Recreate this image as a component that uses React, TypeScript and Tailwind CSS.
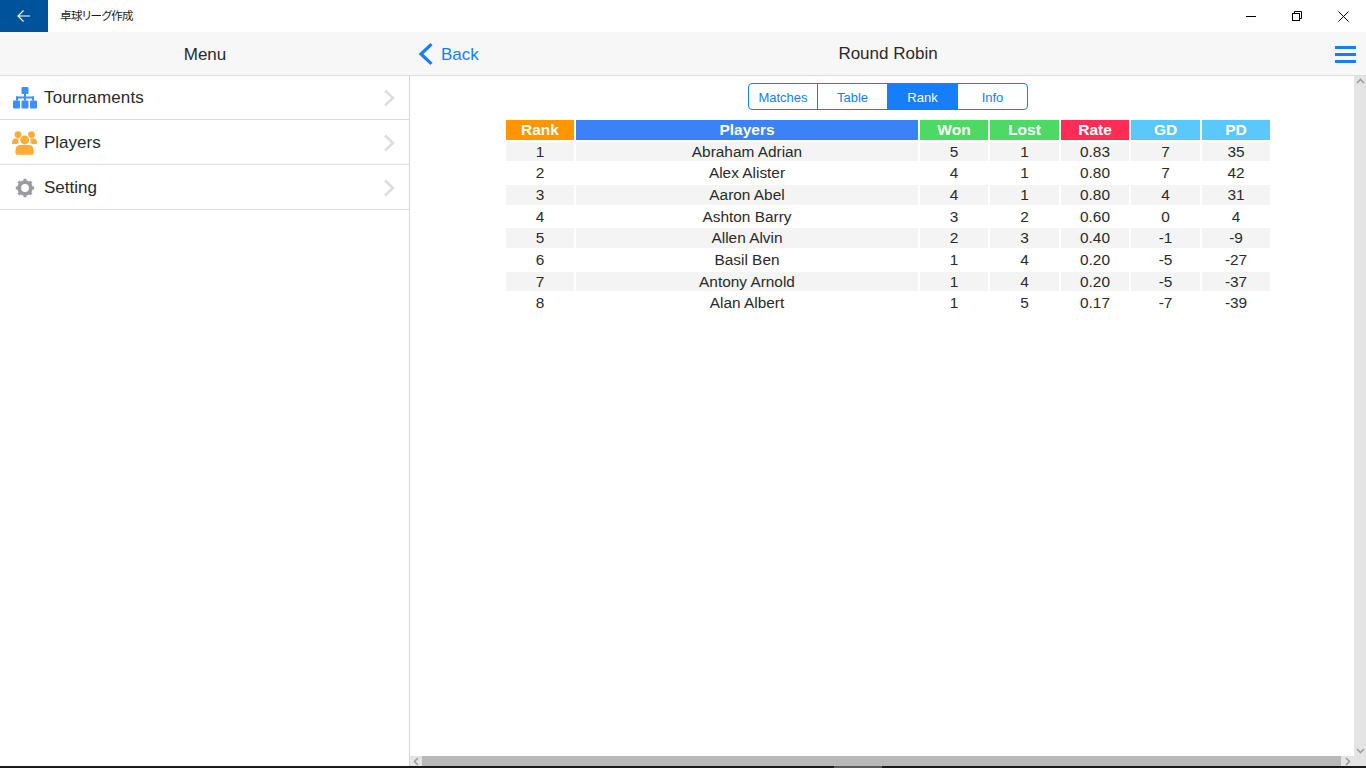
import React from "react";

const cols = ["Rank", "Players", "Won", "Lost", "Rate", "GD", "PD"];
const heads = ["bg-[#ff9500]", "bg-[#3b82f6]", "bg-[#4cd964]", "bg-[#4cd964]", "bg-[#ff2d55]", "bg-[#5ac8fa]", "bg-[#5ac8fa]"];
const rows = [
  ["1", "Abraham Adrian", "5", "1", "0.83", "7", "35"],
  ["2", "Alex Alister", "4", "1", "0.80", "7", "42"],
  ["3", "Aaron Abel", "4", "1", "0.80", "4", "31"],
  ["4", "Ashton Barry", "3", "2", "0.60", "0", "4"],
  ["5", "Allen Alvin", "2", "3", "0.40", "-1", "-9"],
  ["6", "Basil Ben", "1", "4", "0.20", "-5", "-27"],
  ["7", "Antony Arnold", "1", "4", "0.20", "-5", "-37"],
  ["8", "Alan Albert", "1", "5", "0.17", "-7", "-39"],
];

function Chevron() {
  return (
    <svg width="12" height="18" viewBox="0 0 12 18" className="mr-[14px]" fill="none" stroke="#dcdcdc" strokeWidth="2.4">
      <path d="M2 1.5 L10 9 L2 16.5" />
    </svg>
  );
}

function TreeIcon() {
  return (
    <svg width="24" height="22" viewBox="0 0 24 22" fill="#3d8ffb">
      <rect x="8.5" y="0" width="7" height="7" rx="1" />
      <rect x="11" y="6" width="2" height="5" />
      <rect x="3" y="9.5" width="18" height="2" />
      <rect x="3" y="9.5" width="2" height="4" />
      <rect x="19" y="9.5" width="2" height="4" />
      <rect x="11" y="9.5" width="2" height="4" />
      <rect x="0" y="13.5" width="7" height="8" rx="1" />
      <rect x="8.5" y="13.5" width="7" height="8" rx="1" />
      <rect x="17" y="13.5" width="7" height="8" rx="1" />
    </svg>
  );
}

function PeopleIcon() {
  return (
    <svg width="25" height="24" viewBox="0 0 25 24" fill="#ffab36" className="-ml-[1px]">
      <circle cx="6" cy="3.6" r="3.4" />
      <circle cx="19.5" cy="3.6" r="3.4" />
      <path d="M0 11.5 C0 8.5 1.5 7.5 3.5 7.5 L7 7.5 C5.8 9 6 11 7 12.5 L5 12.5 L5 13 L1 13 C0.3 13 0 12.5 0 11.5 Z" />
      <path d="M25 11.5 C25 8.5 23.5 7.5 21.5 7.5 L18 7.5 C19.2 9 19 11 18 12.5 L20 12.5 L20 13 L24 13 C24.7 13 25 12.5 25 11.5 Z" />
      <circle cx="12.7" cy="9" r="4.4" />
      <path d="M3.5 20 C3.5 16 5.5 14 8 14 L17.5 14 C20 14 21.7 16 21.7 20 L21.7 21.5 C21.7 23 21 23.8 19.5 23.8 L6 23.8 C4.5 23.8 3.5 23 3.5 21.5 Z" />
    </svg>
  );
}

function GearIcon() {
  return (
    <svg width="20" height="20" viewBox="0 0 20 20" fill="none">
      <circle cx="10" cy="10" r="5.8" stroke="#9b9b9f" strokeWidth="3.8" />
      <g stroke="#9b9b9f" strokeWidth="3">
        <path d="M10 0.8 V4" />
        <path d="M10 16 V19.2" />
        <path d="M0.8 10 H4" />
        <path d="M16 10 H19.2" />
        <path d="M3.5 3.5 L5.8 5.8" />
        <path d="M14.2 14.2 L16.5 16.5" />
        <path d="M3.5 16.5 L5.8 14.2" />
        <path d="M14.2 5.8 L16.5 3.5" />
      </g>
    </svg>
  );
}

function MenuRow({ icon, label, first }: { icon: React.ReactNode; label: string; first?: boolean }) {
  return (
    <div className={`flex items-center border-b border-[#dcdcdc] ${first ? "h-[44px]" : "h-[45px] pt-[1px]"}`}>
      <div className="flex w-[44px] justify-center pl-[6px]">{icon}</div>
      <span className={`flex-1 text-[17px] text-[#2a2a2a] ${first ? "pt-[1px] tracking-[0.15px]" : ""}`}>{label}</span>
      <Chevron />
    </div>
  );
}

export default function App() {
  return (
    <div className="flex h-[768px] w-[1366px] flex-col overflow-hidden bg-white font-['Liberation_Sans',Arial,sans-serif]">
      {/* Title bar */}
      <div className="flex h-8 shrink-0 items-center bg-white">
        <div className="flex h-8 w-12 items-center justify-center bg-[#00529b]">
          <svg width="14" height="14" viewBox="0 0 14 14" fill="none" stroke="#ffffff" strokeWidth="1.1">
            <path d="M1 7 H13 M6.5 1.5 L1 7 L6.5 12.5" />
          </svg>
        </div>
        <span className="ml-3 flex-1 font-['Noto_Sans_CJK_JP',sans-serif] text-[11.5px] tracking-[-0.6px] text-[#1a1a1a] [font-feature-settings:'palt']">卓球リーグ作成</span>
        <div className="flex items-center">
          <div className="flex w-[46px] justify-center">
            <svg width="10" height="10" viewBox="0 0 10 10" stroke="#000000" fill="none"><path d="M0 5.5 H10" /></svg>
          </div>
          <div className="flex w-[46px] justify-center">
            <svg width="10" height="10" viewBox="0 0 10 10" stroke="#000000" fill="none">
              <rect x="0.5" y="2.5" width="7" height="7" />
              <path d="M2.5 2.5 V0.5 H9.5 V7.5 H7.5" />
            </svg>
          </div>
          <div className="flex w-[46px] justify-center">
            <svg width="11" height="11" viewBox="0 0 11 11" stroke="#000000" fill="none"><path d="M0.5 0.5 L10.5 10.5 M10.5 0.5 L0.5 10.5" /></svg>
          </div>
        </div>
      </div>

      {/* Main */}
      <div className="flex min-h-0 flex-1">
        {/* Left panel */}
        <div className="flex w-[410px] shrink-0 flex-col">
          <div className="flex h-[44px] shrink-0 items-center justify-center border-b border-[#dcdcdc] bg-[#f7f7f7] pt-[2px] text-[17px] text-[#2a2a2a]">Menu</div>
          <div className="flex-1 border-r border-[#d4d4d4]">
            <MenuRow first icon={<TreeIcon />} label="Tournaments" />
            <MenuRow icon={<PeopleIcon />} label="Players" />
            <MenuRow icon={<GearIcon />} label="Setting" />
          </div>
        </div>

        {/* Right panel */}
        <div className="flex min-w-0 flex-1 flex-col">
          <div className="relative flex h-[44px] shrink-0 items-center justify-center border-b border-[#dcdcdc] bg-[#f7f7f7]">
            <div className="absolute left-[8px] top-[10px] flex items-center gap-[8px] text-[17px] text-[#147efb]">
              <svg width="15" height="22" viewBox="0 0 15 22" fill="none" stroke="#147efb" strokeWidth="3.2" className="-mt-[2px]">
                <path d="M13.5 1.2 L3 11 L13.5 20.8" />
              </svg>
              <span>Back</span>
            </div>
            <span className="pt-[1px] text-[17px] text-[#2a2a2a]">Round Robin</span>
            <div className="absolute right-[10px] top-[14px] flex w-[21px] flex-col gap-[4px]">
              <div className="h-[3px] bg-[#147efb]" />
              <div className="h-[3px] bg-[#147efb]" />
              <div className="h-[3px] bg-[#147efb]" />
            </div>
          </div>

          <div className="flex min-h-0 flex-1">
            <div className="flex min-w-0 flex-1 flex-col items-center pl-[12px]">
              {/* Segmented */}
              <div className="mt-[7px] flex h-[27px] w-[280px] overflow-hidden rounded-[4px] border border-[#147efb] text-[13px] text-[#147efb]">
                <div className="flex w-[69px] items-center justify-center border-r border-[#147efb] pt-[2px]">Matches</div>
                <div className="flex w-[69px] items-center justify-center pt-[2px]">Table</div>
                <div className="flex w-[71px] items-center justify-center bg-[#147efb] pt-[2px] text-white">Rank</div>
                <div className="flex flex-1 items-center justify-center pt-[2px]">Info</div>
              </div>
              {/* Table */}
              <div className="mt-[10px] grid grid-cols-[68px_342px_68px_69px_68px_69px_68px] auto-rows-[19.67px] gap-x-[2px] gap-y-[2px] text-[15.4px] text-[#2a2a2a]">
                {cols.map((c, i) => (
                  <div key={c} className={`flex items-center justify-center text-[15.5px] font-bold text-white ${heads[i]}`}>{c}</div>
                ))}
                {rows.map((r, ri) =>
                  r.map((v, ci) => (
                    <div key={`${ri}-${ci}`} className={`flex items-center justify-center pb-[0.24px] ${ri % 2 === 0 ? "bg-[#f4f4f4]" : "bg-white"}`}>{v}</div>
                  ))
                )}
              </div>
            </div>
            {/* Vertical scrollbar */}
            <div className="flex w-[12px] shrink-0 flex-col items-center justify-between bg-[#e4e4e4] py-[2px]">
              <svg width="9" height="6" viewBox="0 0 9 6" fill="none" stroke="#9e9e9e" strokeWidth="1.6"><path d="M1 5 L4.5 1.5 L8 5" /></svg>
              <svg width="9" height="6" viewBox="0 0 9 6" fill="none" stroke="#9e9e9e" strokeWidth="1.6"><path d="M1 1 L4.5 4.5 L8 1" /></svg>
            </div>
          </div>

          {/* Horizontal scrollbar */}
          <div className="flex h-[10px] shrink-0 bg-[#e4e4e4]">
            <div className="flex w-[12px] items-center justify-center">
              <svg width="6" height="9" viewBox="0 0 6 9" fill="none" stroke="#9e9e9e" strokeWidth="1.6"><path d="M5 1 L1.5 4.5 L5 8" /></svg>
            </div>
            <div className="w-[919px] bg-[#b9b9b9]" />
            <div className="flex w-[13px] items-center justify-center">
              <svg width="6" height="9" viewBox="0 0 6 9" fill="none" stroke="#9e9e9e" strokeWidth="1.6"><path d="M1 1 L4.5 4.5 L1 8" /></svg>
            </div>
          </div>
        </div>
      </div>

      {/* Bottom strip */}
      <div className="flex h-[2px] shrink-0 bg-[#1a1a1a]">
        <div className="ml-[834px] w-[48px] bg-[#5a5a5a]" />
      </div>
    </div>
  );
}
